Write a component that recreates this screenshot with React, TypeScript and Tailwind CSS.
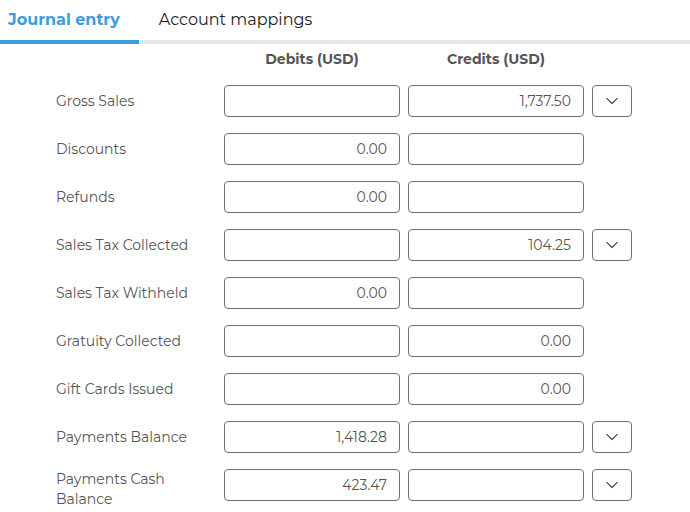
import { ChevronDown } from "lucide-react"

type Row = {
  label: string
  debit: string
  credit: string
  menu?: boolean
}

const rows: Row[] = [
  { label: "Gross Sales", debit: "", credit: "1,737.50", menu: true },
  { label: "Discounts", debit: "0.00", credit: "" },
  { label: "Refunds", debit: "0.00", credit: "" },
  { label: "Sales Tax Collected", debit: "", credit: "104.25", menu: true },
  { label: "Sales Tax Withheld", debit: "0.00", credit: "" },
  { label: "Gratuity Collected", debit: "", credit: "0.00" },
  { label: "Gift Cards Issued", debit: "", credit: "0.00" },
  { label: "Payments Balance", debit: "1,418.28", credit: "", menu: true },
  { label: "Payments Cash Balance", debit: "423.47", credit: "", menu: true },
]

function AmountInput({ value }: { value: string }) {
  return (
    <input
      readOnly
      value={value}
      className="h-8 w-[176px] rounded border border-[#6e7179] bg-white px-3 text-right text-sm text-[#555] outline-none"
    />
  )
}

export default function App() {
  return (
    <div className="h-[512px] w-[690px] overflow-hidden bg-white font-['Montserrat','Inter','Liberation_Sans',sans-serif] text-[#555]">
      <div className="flex border-b-4 border-[#e8e8ec]">
        <button className="-mb-1 border-b-4 border-[#3d9be0] pb-2 pl-2 pr-[19px] pt-2 text-base font-bold text-[#3d9be0]">
          Journal entry
        </button>
        <button className="px-5 pb-2 pt-2 text-base text-[#222]">Account mappings</button>
      </div>

      <div className="flex pl-[224px] pt-[5px] text-sm font-bold text-[#555]">
        <div className="w-[176px] text-center">Debits (USD)</div>
        <div className="ml-2 w-[176px] text-center">Credits (USD)</div>
      </div>

      <div className="mt-4 flex flex-col gap-4 pl-14">
        {rows.map((row) => (
          <div key={row.label} className="flex h-8 items-center">
            <div className={row.label.length > 20 ? "mt-2 w-[146px] text-sm leading-5" : "w-[146px] text-sm leading-5"}>
              {row.label}
            </div>
            <div className="ml-[22px] flex items-center gap-2">
              <AmountInput value={row.debit} />
              <AmountInput value={row.credit} />
              {row.menu && (
                <button className="flex h-8 w-10 items-center justify-center rounded border border-[#6e7179] bg-white">
                  <ChevronDown className="h-5 w-5 text-[#555]" strokeWidth={1.6} />
                </button>
              )}
            </div>
          </div>
        ))}
      </div>
    </div>
  )
}
